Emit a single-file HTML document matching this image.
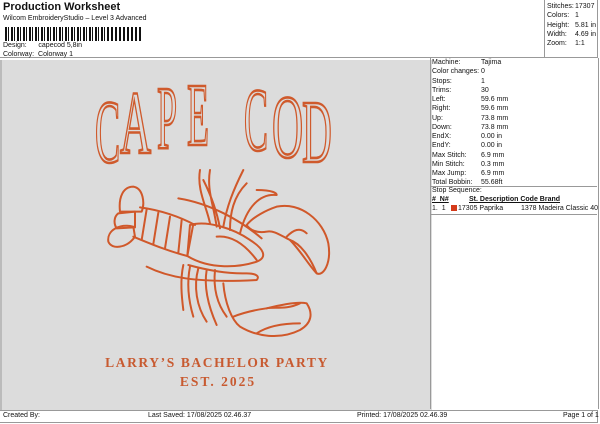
<!DOCTYPE html>
<html><head><style>
body{margin:0;width:600px;height:424px;background:#fff;position:relative;overflow:hidden;font-family:"Liberation Sans",sans-serif;font-size:7px;color:#111}
.a{position:absolute;white-space:nowrap}
</style></head><body>
<div class="a" style="left:0;top:0;width:597px;height:57px;border:1px solid #999;border-top:none;border-left:none"></div>
<div class="a" style="left:544px;top:0;width:1px;height:57px;background:#999"></div>
<div class="a" style="left:3px;top:1px;font-size:11px;font-weight:bold">Production Worksheet</div>
<div class="a" style="left:3px;top:15px">Wilcom EmbroideryStudio – Level 3 Advanced</div>
<div class="a" style="left:5px;top:27px;width:104px;height:14px;background:repeating-linear-gradient(90deg,#111 0 2px,#fff 2px 3px,#111 3px 4px,#fff 4px 6px)"></div>
<div class="a" style="left:111px;top:27px;width:32px;height:14px;background:repeating-linear-gradient(90deg,#111 0 2px,#fff 2px 4px)"></div>
<div class="a" style="left:3px;top:42px">Design:&nbsp;&nbsp;&nbsp;&nbsp;&nbsp;&nbsp;capecod 5,8in</div>
<div class="a" style="left:3px;top:51px">Colorway:&nbsp;&nbsp;Colorway 1</div>
<div class="a" style="left:547px;top:2px;line-height:9.3px">Stitches:<br>Colors:<br>Height:<br>Width:<br>Zoom:</div>
<div class="a" style="left:575px;top:2px;line-height:9.3px">17307<br>1<br>5.81 in<br>4.69 in<br>1:1</div>
<div class="a" style="left:0;top:60px;width:430px;height:350px;background:#dcdcdc;border-left:2px solid #bbb"></div>
<div class="a" style="left:430px;top:58px;width:167px;height:351px;border-left:1px solid #999;border-right:1px solid #999"></div>
<div class="a" style="left:432px;top:58px;line-height:9.25px">Machine:<br>Color changes:<br>Stops:<br>Trims:<br>Left:<br>Right:<br>Up:<br>Down:<br>EndX:<br>EndY:<br>Max Stitch:<br>Min Stitch:<br>Max Jump:<br>Total Bobbin:</div>
<div class="a" style="left:481px;top:58px;line-height:9.25px">Tajima<br>0<br>1<br>30<br>59.6 mm<br>59.6 mm<br>73.8 mm<br>73.8 mm<br>0.00 in<br>0.00 in<br>6.9 mm<br>0.3 mm<br>6.9 mm<br>55.68ft</div>
<div class="a" style="left:431px;top:186px;width:166px;height:1px;background:#999"></div>
<div class="a" style="left:432px;top:187px">Stop Sequence:</div>
<div class="a" style="left:432px;top:196px;font-weight:bold;text-decoration:underline">#&nbsp;&nbsp;N#</div>
<div class="a" style="left:469px;top:196px;font-weight:bold;text-decoration:underline">St. Description Code Brand</div>
<div class="a" style="left:432px;top:205px">1.&nbsp;&nbsp;1</div>
<div class="a" style="left:451px;top:205px;width:6px;height:6px;background:#d43a1a"></div>
<div class="a" style="left:458px;top:205px">17305 Paprika</div>
<div class="a" style="left:521px;top:205px">1378 Madeira Classic 40</div>
<div class="a" style="left:431px;top:214px;width:166px;height:1px;background:#999"></div>
<div class="a" style="left:0;top:410px;width:597px;height:11px;border-top:1px solid #999;border-bottom:1px solid #999;border-right:1px solid #999"></div>
<div class="a" style="left:3px;top:412px">Created By:</div>
<div class="a" style="left:148px;top:412px">Last Saved: 17/08/2025 02.46.37</div>
<div class="a" style="left:357px;top:412px">Printed: 17/08/2025 02.46.39</div>
<div class="a" style="left:563px;top:412px">Page 1 of 1</div>
<svg class="a" style="left:0;top:0" width="430" height="410">
<g font-family="Liberation Serif,serif" font-size="90" fill="none" stroke="#cf5a2c" stroke-width="2.6">
<text transform="translate(95,162) scale(0.42,1)">C</text>
<text transform="translate(120,153) scale(0.48,1)">A</text>
<text transform="translate(157,148) scale(0.40,1)">P</text>
<text transform="translate(187,145) scale(0.40,1)">E</text>
<text transform="translate(244,150) scale(0.40,1)">C</text>
<text transform="translate(272,157) scale(0.48,1)">O</text>
<text transform="translate(302,162) scale(0.46,1)">D</text>
</g>
<g font-family="Liberation Serif,serif" font-weight="bold" fill="#c85a30">
<text x="217" y="367" font-size="13.5" text-anchor="middle" letter-spacing="1.6">LARRY’S BACHELOR PARTY</text>
<text x="218" y="386" font-size="13.5" text-anchor="middle" letter-spacing="2">EST. 2025</text>
</g>
<g transform="translate(100,170) scale(0.3333)" fill="none" stroke="#d0582a" stroke-width="6" stroke-linejoin="round" stroke-linecap="round">
<path d="M60,125 C55,80 70,50 100,50 C130,55 135,100 125,125 Z"/>
<path d="M100,170 C60,160 20,180 25,215 C35,240 80,235 105,200 Z"/>
<path d="M55,130 L105,125 L105,172 L50,175 C40,160 42,140 55,130Z"/>
<path d="M120,112 C180,120 240,140 285,165 M100,200 C160,225 210,245 262,258"/>
<path d="M140,118 L125,210 M175,128 L160,222 M210,140 L195,235 M245,150 L235,248 M280,162 L262,258"/>
<path d="M270,165 C320,150 400,175 450,210 C490,235 505,262 470,275 C420,292 330,300 262,258 Z"/>
<path d="M350,200 C400,195 440,230 470,270"/>
<path d="M235,85 C330,100 420,150 485,205 M140,290 C200,320 280,340 470,330 C480,320 470,310 440,310 C380,312 320,300 265,285"/>
<path d="M440,165 C460,140 500,120 530,110 C600,95 670,150 685,220 C695,280 670,320 650,310 C630,260 600,220 570,210 C540,195 520,180 500,185 C470,190 450,180 440,165Z"/>
<path d="M570,210 C600,240 630,290 650,310 M560,200 C580,180 600,170 620,190"/>
<path d="M370,340 C375,400 395,450 420,470 C470,500 540,510 600,480 C635,460 640,430 620,400 C600,395 560,400 500,415 C450,422 420,432 400,440"/>
<path d="M500,415 C520,410 560,420 600,400 M470,490 C500,470 540,460 600,460"/>
<path d="M300,0 C290,60 320,110 330,160 M330,0 C320,60 340,100 350,170 M430,0 C400,60 380,110 370,170 M440,40 C400,80 390,130 390,180 M470,60 C520,60 530,70 530,75 C480,70 440,110 420,190 M310,30 C330,70 350,120 360,175"/>
<path d="M250,285 C240,330 245,380 250,420 M270,290 C260,340 265,390 280,440 M295,295 C280,350 290,410 320,455 M320,300 C310,360 330,420 350,465 M345,300 C340,350 350,400 380,440"/>
</g>
</svg>
</body></html>
